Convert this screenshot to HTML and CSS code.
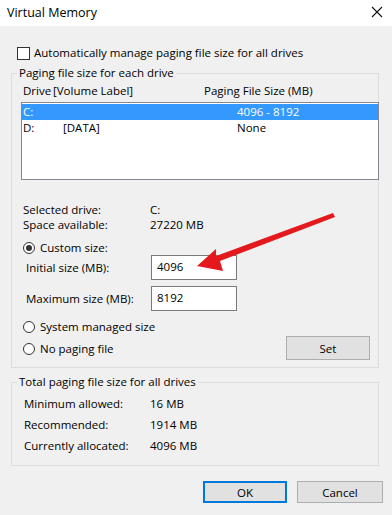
FILE: index.html
```html
<!DOCTYPE html>
<html>
<head>
<meta charset="utf-8">
<link rel="stylesheet" href="styles.css">
</head>
<body>
<div class="dialog">
  <div class="titlebar">
    <span class="title">Virtual Memory</span>
    <svg class="close" width="12" height="12" viewBox="0 0 12 12"><path d="M1 1 L11 11 M11 1 L1 11" stroke="#111" stroke-width="1.1" fill="none"/></svg>
  </div>

  <div class="auto">
    <span class="checkbox"></span>
    <span>Automatically manage paging file size for all drives</span>
  </div>

  <fieldset class="group group1">
    <legend>Paging file size for each drive</legend>
    <div class="colhead">
      <span class="c-drive">Drive</span><span class="c-label">[Volume Label]</span><span class="c-size">Paging File Size (MB)</span>
    </div>
    <div class="listbox">
      <div class="lrow selected"><span class="c-drive">C:</span><span class="c-label2"></span><span class="c-size">4096 - 8192</span></div>
      <div class="lrow"><span class="c-drive">D:</span><span class="c-label2">[DATA]</span><span class="c-size">None</span></div>
    </div>

    <div class="info">
      <div class="irow"><span class="ilabel">Selected drive:</span><span>C:</span></div>
      <div class="irow"><span class="ilabel">Space available:</span><span>27220 MB</span></div>
    </div>

    <div class="radio-row custom"><span class="radio checked"></span><span>Custom size:</span></div>
    <div class="field-row first"><span class="flabel">Initial size (MB):</span><span class="input">4096</span></div>
    <div class="field-row"><span class="flabel">Maximum size (MB):</span><span class="input">8192</span></div>

    <div class="lower">
      <div class="radios">
        <div class="radio-row"><span class="radio"></span><span>System managed size</span></div>
        <div class="radio-row"><span class="radio"></span><span>No paging file</span></div>
      </div>
      <div class="btn set">Set</div>
    </div>
  </fieldset>

  <fieldset class="group group2">
    <legend>Total paging file size for all drives</legend>
    <div class="trow"><span class="tlabel">Minimum allowed:</span><span>16 MB</span></div>
    <div class="trow"><span class="tlabel">Recommended:</span><span>1914 MB</span></div>
    <div class="trow"><span class="tlabel">Currently allocated:</span><span>4096 MB</span></div>
  </fieldset>

  <div class="buttons">
    <div class="btn ok">OK</div>
    <div class="btn cancel">Cancel</div>
  </div>

  <svg class="arrow" width="392" height="515" viewBox="0 0 392 515">
    <polygon points="197,266 216,249 216,256 333,213 335,217 220,261 223,271" fill="#e3191e"/>
  </svg>
</div>
</body>
</html>
```

FILE: styles.css
```css
* { box-sizing: border-box; }
html, body { margin: 0; padding: 0; }
body {
  font-family: "Open Sans", "Noto Sans", sans-serif;
  font-size: 11.5px;
  color: #000;
  background: #f0f0f0;
}
.dialog {
  position: relative;
  width: 392px;
  height: 515px;
  background: #f0f0f0;
  overflow: hidden;
}
.titlebar {
  height: 26px;
  background: #fff;
  display: flex;
  align-items: center;
  justify-content: space-between;
  padding: 0 9px 2px 7px;
}
.title { font-size: 12.5px; }
.close { margin-top: 0; }

.auto {
  margin-top: 19px;
  height: 16px;
  display: flex;
  align-items: center;
  padding-left: 17px;
  line-height: 16px;
}
.checkbox {
  width: 13px;
  height: 13px;
  border: 1px solid #333;
  background: #fff;
  margin-right: 4px;
}

.group {
  margin: 0 0 0 11px;
  width: 368px;
  border: 1px solid #dcdcdc;
  padding: 0 0 0 9px;
  min-width: 0;
}
.group legend {
  padding: 0 2px;
  margin-left: -4px;
  line-height: 16px;
}
.group1 { margin-top: 4px; padding-bottom: 7px; }

.colhead {
  margin-top: 2px;
  line-height: 16px;
  display: flex;
  padding-left: 2px;
}
.c-drive { width: 30px; }
.c-label { width: 151px; }
.c-label2 { width: 184px; }
.colhead .c-drive { width: 30px; }

.listbox {
  margin-top: 3px;
  height: 78px;
  border: 1px solid #828790;
  background: #fff;
  padding-top: 1px;
  margin-right: -1px;
}
.lrow {
  display: flex;
  height: 16px;
  line-height: 16px;
  padding-left: 1px;
}
.lrow .c-drive { width: 40px; }
.lrow .c-label2 { width: 174px; }
.lrow.selected { background: #3399ff; color: #fff; }

.info { margin-top: 22px; padding-left: 2px; }
.irow { display: flex; line-height: 15px; height: 15px; }
.ilabel { width: 127px; }

.radio-row {
  display: flex;
  align-items: center;
  height: 16px;
  line-height: 16px;
  padding-left: 2px;
}
.radio-row.custom { margin-top: 9px; height: 14px; }
.radio {
  width: 12px;
  height: 12px;
  border: 1px solid #333;
  border-radius: 50%;
  background: #fff;
  margin-right: 5px;
  position: relative;
  flex: none;
}
.radio.checked::after {
  content: "";
  position: absolute;
  left: 2px; top: 2px;
  width: 6px; height: 6px;
  border-radius: 50%;
  background: #333;
}

.field-row {
  display: flex;
  align-items: center;
  height: 25px;
  margin-top: 6px;
  padding-left: 5px;
}
.field-row.first { margin-top: 0; }
.flabel { width: 125px; }
.input {
  width: 86px;
  height: 25px;
  border: 1px solid #7a7a7a;
  background: #fff;
  padding: 3px 0 0 5px;
  line-height: 16px;
}

.lower {
  margin-top: 8px;
  display: flex;
  justify-content: space-between;
  align-items: flex-start;
  padding-right: 8px;
}
.radios { display: flex; flex-direction: column; gap: 6px; }

.btn {
  display: flex;
  align-items: center;
  justify-content: center;
  background: #e1e1e1;
  border: 1px solid #adadad;
}
.set { width: 84px; height: 24px; margin-top: 17px; }

.group2 { margin-top: 6px; padding-bottom: 9px; padding-left: 12px; }
.group2 legend { margin-left: -7px; }
.trow { display: flex; line-height: 21px; height: 21px; }
.group2 .trow:first-of-type { margin-top: 3px; }
.tlabel { width: 126px; }

.buttons {
  margin-top: 15px;
  display: flex;
  justify-content: flex-end;
  gap: 10px;
  padding-right: 9px;
}
.ok { width: 84px; height: 22px; border: 2px solid #0078d7; }
.cancel { width: 86px; height: 22px; }

.arrow {
  position: absolute;
  left: 0;
  top: 0;
  pointer-events: none;
}
```
